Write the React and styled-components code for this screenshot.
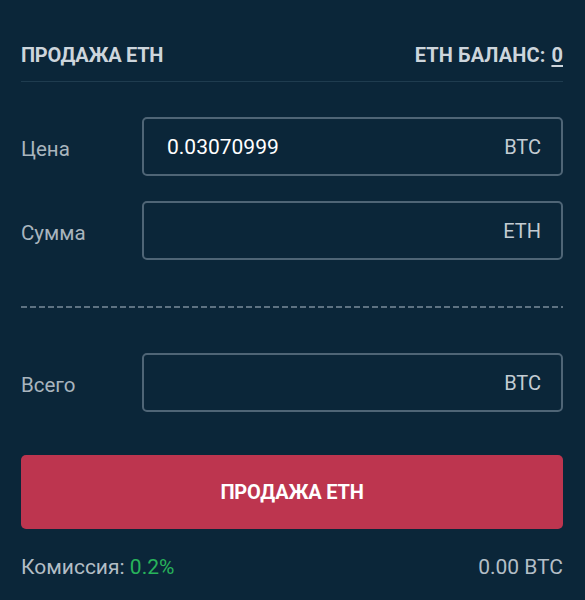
import React from "react";
import styled, { createGlobalStyle } from "styled-components";

const Global = createGlobalStyle`
  html, body { margin: 0; padding: 0; background: #0b2639; }
  body { font-family: Roboto, "Open Sans", sans-serif; }
  * { box-sizing: border-box; }
`;

const Panel = styled.div`
  width: 585px;
  height: 600px;
  background: #0b2639;
  padding: 0 22px 0 21px;
  display: flex;
  flex-direction: column;
`;

const Header = styled.div`
  display: flex;
  justify-content: space-between;
  align-items: center;
  height: 82px;
  padding-top: 28px;
  border-bottom: 1px solid #1f3c4f;
`;

const Title = styled.div`
  color: #cdd5dc;
  font-weight: 700;
  font-size: 20px;
  letter-spacing: -0.3px;
`;

const Balance = styled.div`
  color: #cdd5dc;
  font-weight: 700;
  font-size: 20px;
  letter-spacing: 0.1px;
  span {
    text-decoration: underline;
    text-underline-offset: 3px;
    text-decoration-thickness: 2px;
    margin-left: 6px;
  }
`;

const Form = styled.div`
  display: flex;
  flex-direction: column;
  gap: 25px;
  margin-top: 35px;
`;

const Row = styled.div`
  display: flex;
  align-items: center;
`;

const Label = styled.div`
  width: 121px;
  padding-top: 4px;
  color: #a9b5be;
  font-size: 20.5px;
`;

const Field = styled.div`
  flex: 1;
  height: 59px;
  border: 2px solid #4f6576;
  border-radius: 5px;
  display: flex;
  align-items: center;
  justify-content: space-between;
  padding: 0 20px 0 23px;
`;

const Value = styled.div`
  color: #ffffff;
  font-size: 21px;
`;

const Unit = styled.div`
  color: #c3ccd3;
  font-size: 20px;
  margin-left: auto;
`;

const Divider = styled.div`
  height: 2px;
  margin: 46px 0 45px;
  background-image: linear-gradient(to right, #5e7282 0 6px, transparent 6px 9px);
  background-size: 9px 2px;
  background-repeat: repeat-x;
`;

const Button = styled.button`
  margin-top: 43px;
  height: 74px;
  border: none;
  border-radius: 5px;
  background: #bd354f;
  color: #ffffff;
  font-family: inherit;
  font-weight: 700;
  font-size: 20px;
  letter-spacing: -0.2px;
  cursor: pointer;
`;

const Footer = styled.div`
  display: flex;
  justify-content: space-between;
  align-items: center;
  margin-top: 26px;
  color: #b3bec6;
  font-size: 21px;
`;

const Green = styled.span`
  color: #28b35b;
`;

export default function App() {
  return (
    <>
      <Global />
      <Panel>
        <Header>
          <Title>ПРОДАЖА ЕТН</Title>
          <Balance>
            ЕТН БАЛАНС:<span>0</span>
          </Balance>
        </Header>
        <Form>
          <Row>
            <Label>Цена</Label>
            <Field>
              <Value>0.03070999</Value>
              <Unit>BTC</Unit>
            </Field>
          </Row>
          <Row>
            <Label>Сумма</Label>
            <Field>
              <Unit>ETH</Unit>
            </Field>
          </Row>
        </Form>
        <Divider />
        <Row>
          <Label>Всего</Label>
          <Field>
            <Unit>BTC</Unit>
          </Field>
        </Row>
        <Button>ПРОДАЖА ЕТН</Button>
        <Footer>
          <div>
            Комиссия: <Green>0.2%</Green>
          </div>
          <div>0.00 BTC</div>
        </Footer>
      </Panel>
    </>
  );
}
